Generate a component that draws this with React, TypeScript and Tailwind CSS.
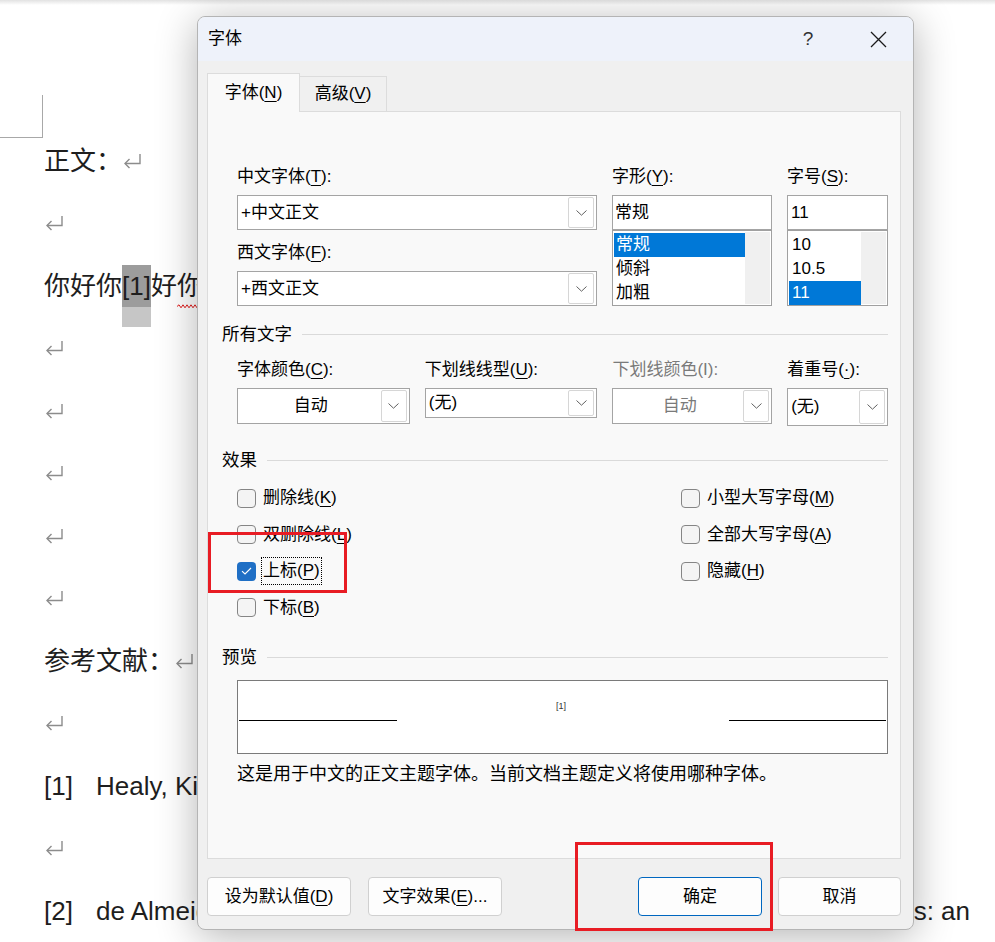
import clsx from 'clsx';

const U = ({ c }: { c: string }) => <span className="underline underline-offset-[3px] decoration-1">{c}</span>;

const Chevron = () => (
  <svg width="11" height="6" viewBox="0 0 11 6" fill="none">
    <path d="M0.5 0.5 L5.5 5.2 L10.5 0.5" stroke="#606060" strokeWidth="1" />
  </svg>
);

interface ComboProps {
  className: string;
  text: string;
  center?: boolean;
  disabled?: boolean;
}

const Combo = ({ className, text, center, disabled }: ComboProps) => (
  <div className={clsx('flex border border-[#a4a4a4] bg-white', className)}>
    <div
      className={clsx(
        'flex-1 flex items-center pl-[3px]',
        center && 'justify-center',
        disabled ? 'text-[#7a7a7a]' : 'text-black'
      )}
    >
      {text}
    </div>
    <div className="my-[1px] mr-[2px] w-[26px] flex items-center justify-center border border-[#d6d6d6] rounded-[2px] bg-white">
      <Chevron />
    </div>
  </div>
);

const Check = ({ checked }: { checked?: boolean }) =>
  checked ? (
    <div className="w-[19px] h-[19px] rounded-[4px] bg-[#1f6fc5] flex items-center justify-center">
      <svg width="11" height="8" viewBox="0 0 11 8" fill="none">
        <path d="M1 4.2 L4 7 L10 1" stroke="white" strokeWidth="1.1" />
      </svg>
    </div>
  ) : (
    <div className="w-[19px] h-[19px] rounded-[4px] border border-[#858585] bg-[#f4f4f4]" />
  );

const CheckRow = ({ label, checked, focus }: { label: React.ReactNode; checked?: boolean; focus?: boolean }) => (
  <div className="h-[36.5px] flex items-center">
    <Check checked={checked} />
    <div className={clsx('ml-[6px] leading-[26px] px-[1px]', focus ? 'outline outline-1 outline-dotted outline-black' : '')}>
      {label}
    </div>
  </div>
);

const SectionHead = ({ title }: { title: string }) => (
  <div className="flex items-center h-[22px]">
    <span className="text-[17.5px]">{title}</span>
    <div className="flex-1 h-px bg-[#dadada] ml-[10px]" />
  </div>
);

const Ret = () => (
  <svg className="shrink-0" width="20" height="17" viewBox="0 0 20 17" fill="none">
    <path d="M18 1 V10.5 H3" stroke="#8c8c8c" strokeWidth="1.4" />
    <path d="M7.5 6 L3 10.5 L7.5 15" stroke="#8c8c8c" strokeWidth="1.4" />
  </svg>
);

const Line = ({ children }: { children?: React.ReactNode }) => (
  <div className="h-[62.5px] flex items-center whitespace-nowrap">{children ?? <Ret />}</div>
);

const FontDialog = () => (
  <div className="absolute left-[197px] top-[16px] w-[717px] h-[914px] rounded-[8px] border border-[#b4b4b4] bg-[#f0f0f0] overflow-hidden shadow-[0_6px_40px_rgba(0,0,0,0.3)] text-[17px] text-black font-['Liberation_Sans','Noto_Sans_CJK_SC',sans-serif]">
    {/* title bar */}
    <div className="h-[44px] bg-[#eef2fa] flex items-center pl-[10px]">
      <span className="text-[17px]">字体</span>
      <div className="ml-auto w-[46px] flex justify-center text-[19px] text-[#333]">?</div>
      <div className="ml-[24px] mr-[12px] w-[46px] flex justify-center">
        <svg width="17" height="17" viewBox="0 0 17 17">
          <path d="M1 1 L16 16 M16 1 L1 16" stroke="#1a1a1a" strokeWidth="1.3" />
        </svg>
      </div>
    </div>

    <div className="pt-[12px] pl-[9px] pr-[10px]">
      {/* tabs */}
      <div className="flex items-end relative z-10 -mb-px">
        <div className="w-[93px] h-[39px] border border-b-0 border-[#dcdcdc] bg-[#f9f9f9] flex items-center justify-center">
          字体(<U c="N" />)
        </div>
        <div className="w-[87px] h-[36px] border border-l-0 border-[#dcdcdc] bg-[#f0f0f0] flex items-center justify-center">
          高级(<U c="V" />)
        </div>
      </div>

      {/* panel */}
      <div className="w-[694px] h-[748px] border border-[#dcdcdc] bg-[#f9f9f9] pl-[14px] pr-[12px] pt-[54px]">
        {/* row 1 */}
        <div className="flex ml-[15px]">
          <div className="w-[360px]">
            <div className="h-[22px] leading-[22px]">中文字体(<U c="T" />):</div>
            <Combo className="mt-[7px] h-[35px]" text="+中文正文" />
            <div className="h-[22px] leading-[22px] mt-[12px]">西文字体(<U c="F" />):</div>
            <Combo className="mt-[7px] h-[35px]" text="+西文正文" />
          </div>
          <div className="w-[160px] ml-[15px]">
            <div className="h-[22px] leading-[22px]">字形(<U c="Y" />):</div>
            <div className="mt-[7px] h-[35px] border border-[#a4a4a4] bg-white flex items-center pl-[2px]">常规</div>
            <div className="h-[76px] border border-[#a0a0a0] bg-white flex">
              <div className="flex-1 pt-[2px] pl-[1px]">
                <div className="h-[24px] leading-[24px] bg-[#0078d7] text-white pl-[2px]">常规</div>
                <div className="h-[24px] leading-[24px] pl-[2px]">倾斜</div>
                <div className="h-[24px] leading-[24px] pl-[2px]">加粗</div>
              </div>
              <div className="w-[25px] bg-[#f0f0f0] my-[1px] mr-[1px]" />
            </div>
          </div>
          <div className="w-[101px] ml-[15px]">
            <div className="h-[22px] leading-[22px]">字号(<U c="S" />):</div>
            <div className="mt-[7px] h-[35px] border border-[#a4a4a4] bg-white flex items-center pl-[3px]">11</div>
            <div className="h-[76px] border border-[#a0a0a0] bg-white flex">
              <div className="flex-1 pt-[2px] pl-[1px]">
                <div className="h-[24px] leading-[24px] pl-[3px]">10</div>
                <div className="h-[24px] leading-[24px] pl-[3px]">10.5</div>
                <div className="h-[24px] leading-[24px] bg-[#0078d7] text-white pl-[3px]">11</div>
              </div>
              <div className="w-[25px] bg-[#f0f0f0] my-[1px] mr-[1px]" />
            </div>
          </div>
        </div>

        <div className="mt-[17px]">
          <SectionHead title="所有文字" />
        </div>

        {/* row 2 */}
        <div className="flex items-start ml-[15px] mt-[14px]">
          <div className="w-[173px]">
            <div className="h-[22px] leading-[22px]">字体颜色(<U c="C" />):</div>
            <Combo className="mt-[7px] h-[36px]" text="自动" center />
          </div>
          <div className="w-[173px] ml-[15px]">
            <div className="h-[22px] leading-[22px]">下划线线型(<U c="U" />):</div>
            <Combo className="mt-[7px] h-[30px]" text="(无)" />
          </div>
          <div className="w-[160px] ml-[15px]">
            <div className="h-[22px] leading-[22px] text-[#7a7a7a]">下划线颜色(I):</div>
            <Combo className="mt-[7px] h-[36px]" text="自动" center disabled />
          </div>
          <div className="w-[101px] ml-[15px]">
            <div className="h-[22px] leading-[22px]">着重号(<U c="·" />):</div>
            <Combo className="mt-[7px] h-[38px]" text="(无)" />
          </div>
        </div>

        <div className="mt-[23px]">
          <SectionHead title="效果" />
        </div>

        <div className="flex ml-[15px] mt-[9px]">
          <div className="w-[444px]">
            <CheckRow label={<>删除线(<U c="K" />)</>} />
            <CheckRow label={<>双删除线(<U c="L" />)</>} />
            <CheckRow label={<>上标(<U c="P" />)</>} checked focus />
            <CheckRow label={<>下标(<U c="B" />)</>} />
          </div>
          <div>
            <CheckRow label={<>小型大写字母(<U c="M" />)</>} />
            <CheckRow label={<>全部大写字母(<U c="A" />)</>} />
            <CheckRow label={<>隐藏(<U c="H" />)</>} />
          </div>
        </div>

        <div className="mt-[20px]">
          <SectionHead title="预览" />
        </div>

        <div className="ml-[15px] mt-[12px] w-[651px] h-[74px] border border-[#7a7a7a] bg-white relative">
          <div className="absolute left-[1px] top-[39px] w-[158px] h-px bg-black" />
          <div className="absolute right-[1px] top-[39px] w-[157px] h-px bg-black" />
          <div className="absolute left-[318px] top-[20px] text-[9px] leading-[10px] text-[#333]">[1]</div>
        </div>

        <div className="ml-[15px] mt-[9px] h-[22px] leading-[22px] text-[18px] whitespace-nowrap">
          这是用于中文的正文主题字体。当前文档主题定义将使用哪种字体。
        </div>
      </div>

      {/* buttons */}
      <div className="flex mt-[18px] h-[39px]">
        <div className="w-[144px] rounded-[4px] border border-[#d0d0d0] bg-[#fdfdfd] flex items-center justify-center">
          设为默认值(<U c="D" />)
        </div>
        <div className="w-[134px] ml-[17px] rounded-[4px] border border-[#d0d0d0] bg-[#fdfdfd] flex items-center justify-center">
          文字效果(<U c="E" />)...
        </div>
        <div className="w-[124px] ml-auto rounded-[4px] border border-[#0067c0] bg-[#fdfdfd] flex items-center justify-center">
          确定
        </div>
        <div className="w-[123px] ml-[16px] mr-[2px] rounded-[4px] border border-[#d0d0d0] bg-[#fdfdfd] flex items-center justify-center">
          取消
        </div>
      </div>
    </div>
  </div>
);

export default function App() {
  return (
    <div className="relative w-[995px] h-[942px] overflow-hidden bg-white text-[#1e1e1e] text-[26px] font-['Liberation_Sans','Noto_Sans_CJK_SC',sans-serif]">
      <div className="h-[5px] bg-linear-to-b from-[#e2e2e2] to-white" />
      <div className="pt-[90px]">
        <div className="w-[43px] h-[43px] border-r border-b border-[#a8a8a8]" />
        <div className="-mt-[8px] pl-[44px]">
          <Line>
            正文：<Ret />
          </Line>
          <Line />
          <Line>
            你好你
            <span className="relative inline-flex h-[42px] items-center bg-[#9c9c9c]">
              [1]
              <span className="absolute left-0 top-full w-full h-[20px] bg-[#c6c6c6]" />
            </span>
            好
            <span className="relative">
              你
              <svg className="absolute left-0 bottom-[-3px]" width="24" height="5" viewBox="0 0 24 5">
                <path d="M0 2.5 L2 0.8 L4 3.8 L6 0.8 L8 3.8 L10 0.8 L12 3.8 L14 0.8 L16 3.8 L18 0.8 L20 3.8 L22 0.8 L24 3.8" stroke="#e02020" strokeWidth="1" fill="none" />
              </svg>
            </span>
          </Line>
          <Line />
          <Line />
          <Line />
          <Line />
          <Line />
          <Line>
            参考文献：<Ret />
          </Line>
          <Line />
          <Line>
            <span className="inline-block w-[52px]">[1]</span>Healy, Kieran.
          </Line>
          <Line />
          <Line>
            <span className="inline-block w-[52px]">[2]</span>de Almeida
            <span className="ml-auto pr-[25px]">es: an</span>
          </Line>
        </div>
      </div>

      <FontDialog />

      {/* annotation boxes */}
      <div className="absolute left-[208px] top-[532px] w-[139px] h-[61px] border-[3px] border-[#e81c24]" />
      <div className="absolute left-[575px] top-[842px] w-[198px] h-[89px] border-[3px] border-[#e81c24]" />
    </div>
  );
}
